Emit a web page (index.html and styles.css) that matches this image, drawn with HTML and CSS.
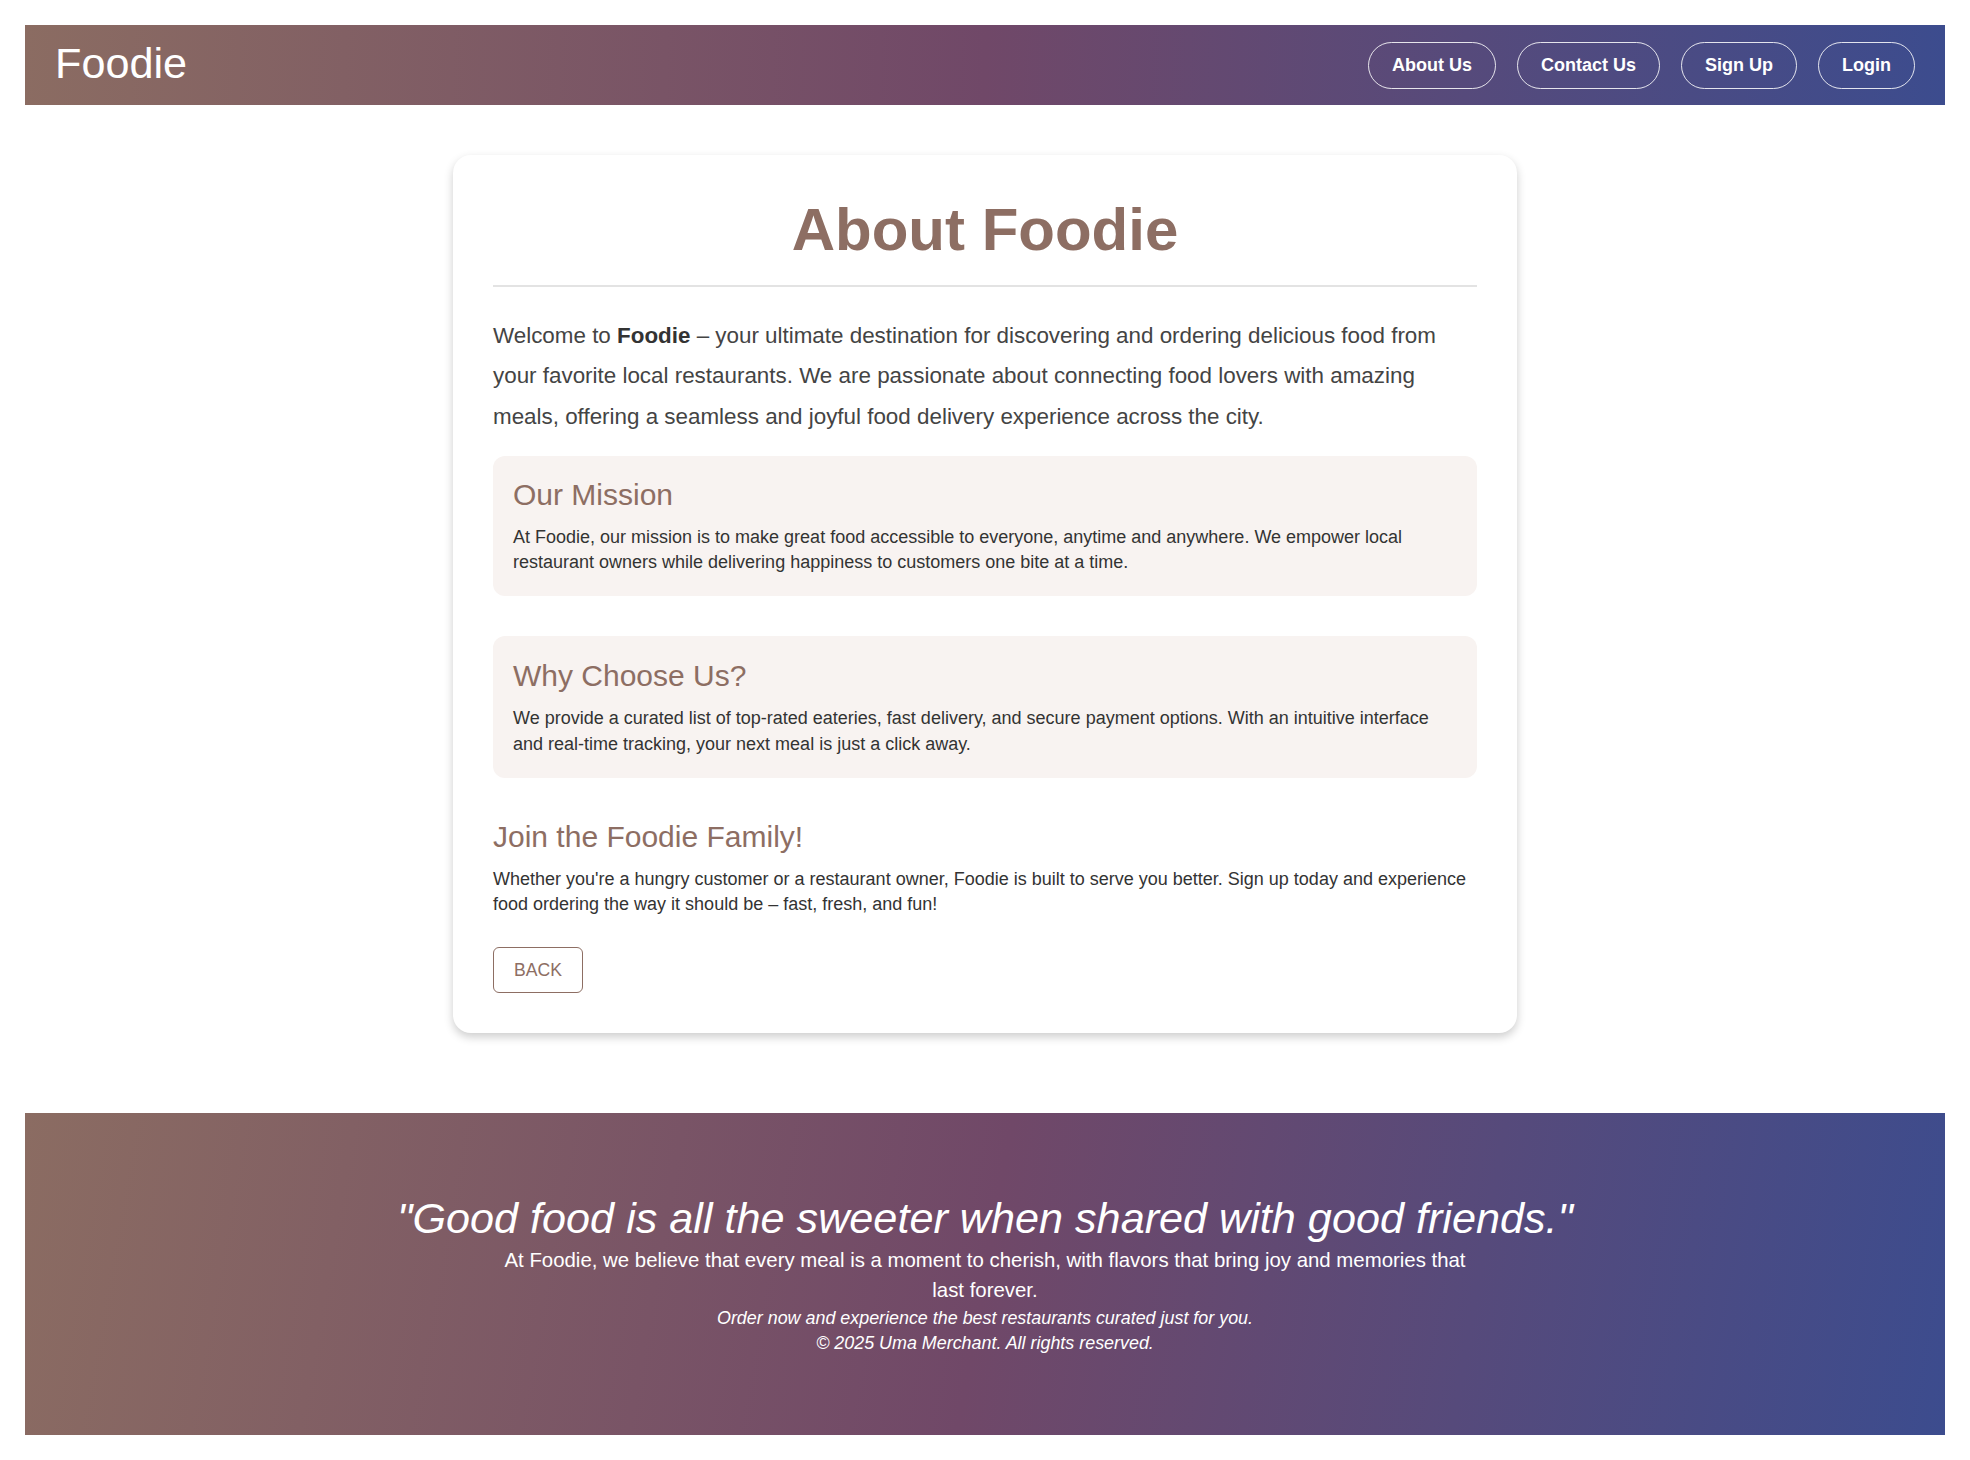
FILE: index.html
```html
<!DOCTYPE html>
<html lang="en">
<head>
<meta charset="utf-8">
<title>About Foodie</title>
<link rel="stylesheet" href="styles.css">
</head>
<body>
  <header class="navbar">
    <div class="brand">Foodie</div>
    <nav class="nav-links">
      <a class="nav-btn" href="#">About Us</a>
      <a class="nav-btn" href="#">Contact Us</a>
      <a class="nav-btn" href="#">Sign Up</a>
      <a class="nav-btn" href="#">Login</a>
    </nav>
  </header>

  <main class="card">
    <h1 class="title">About Foodie</h1>
    <p class="intro">Welcome to <strong>Foodie</strong> – your ultimate destination for discovering and ordering delicious food from your favorite local restaurants. We are passionate about connecting food lovers with amazing meals, offering a seamless and joyful food delivery experience across the city.</p>

    <section class="section highlight">
      <h3 class="section-title">Our Mission</h3>
      <p class="section-text">At Foodie, our mission is to make great food accessible to everyone, anytime and anywhere. We empower local restaurant owners while delivering happiness to customers one bite at a time.</p>
    </section>

    <section class="section highlight">
      <h3 class="section-title">Why Choose Us?</h3>
      <p class="section-text">We provide a curated list of top-rated eateries, fast delivery, and secure payment options. With an intuitive interface and real-time tracking, your next meal is just a click away.</p>
    </section>

    <section class="section plain">
      <h3 class="section-title">Join the Foodie Family!</h3>
      <p class="section-text">Whether you're a hungry customer or a restaurant owner, Foodie is built to serve you better. Sign up today and experience food ordering the way it should be – fast, fresh, and fun!</p>
    </section>

    <button class="back-btn" type="button">BACK</button>
  </main>

  <footer class="footer">
    <p class="quote">"Good food is all the sweeter when shared with good friends."</p>
    <p class="footer-text">At Foodie, we believe that every meal is a moment to cherish, with flavors that bring joy and memories that last forever.</p>
    <p class="footer-small">Order now and experience the best restaurants curated just for you.</p>
    <p class="footer-small">© 2025 Uma Merchant. All rights reserved.</p>
  </footer>
</body>
</html>
```

FILE: styles.css
```css
* {
  box-sizing: border-box;
}

html, body {
  margin: 0;
}

body {
  padding: 25px;
  background: #ffffff;
  font-family: "Liberation Sans", Arial, sans-serif;
  color: #333333;
}

.navbar {
  height: 80px;
  display: flex;
  align-items: center;
  justify-content: space-between;
  padding: 0 30px;
  background: linear-gradient(92deg, #8b6c62 0%, #704868 50%, #3c4c8e 100%);
}

.brand {
  font-size: 43.2px;
  color: #ffffff;
  line-height: 1;
  margin-top: -2px;
}

.nav-links {
  display: flex;
  gap: 21px;
}

.nav-btn {
  display: inline-block;
  padding: 12px 23px;
  border: 1px solid rgba(255, 255, 255, 0.85);
  border-radius: 30px;
  color: #ffffff;
  font-size: 18px;
  line-height: 21px;
  font-weight: bold;
  text-decoration: none;
}

.card {
  width: 1064px;
  margin: 50px auto 80px;
  padding: 40px;
  background: #ffffff;
  border-radius: 18px;
  box-shadow: 0 4px 10px rgba(0, 0, 0, 0.2);
}

.title {
  margin: 0;
  padding-bottom: 21px;
  border-bottom: 2px solid #e3e3e3;
  text-align: center;
  font-size: 60px;
  line-height: 1.15;
  font-weight: bold;
  color: #8d6e63;
}

.intro {
  margin: 29px 0 19px;
  font-size: 22.4px;
  line-height: 40.3px;
  color: #444444;
}

.intro strong {
  color: #333333;
}

.section {
  margin: 0 0 40px;
}

.highlight {
  padding: 21px 20px;
  background: #f8f3f1;
  border-radius: 12px;
}

.highlight + .highlight {
  padding-top: 22px;
}

.plain {
  margin-top: 41px;
  margin-bottom: 30px;
}

.section-title {
  margin: 0 0 12px;
  font-size: 30px;
  line-height: 36px;
  font-weight: normal;
  color: #8d6e63;
}

.section-text {
  margin: 0;
  font-size: 18px;
  line-height: 25.2px;
  color: #333333;
}

.back-btn {
  display: block;
  padding: 12px 20px;
  border: 1px solid #8d6e63;
  border-radius: 6px;
  background: #ffffff;
  color: #8d6e63;
  font-family: "Liberation Sans", Arial, sans-serif;
  font-size: 17.6px;
  line-height: 20px;
  cursor: pointer;
}

.footer {
  padding: 81px 20px 79px;
  text-align: center;
  color: #ffffff;
  background: linear-gradient(100deg, #8b6c62 0%, #704868 50%, #3c4c8e 100%);
}

.quote {
  margin: 0 0 4px;
  font-size: 43.2px;
  line-height: 48px;
  font-style: italic;
}

.footer-text {
  max-width: 985px;
  margin: 0 auto;
  font-size: 20.4px;
  line-height: 29.8px;
}

.footer-small {
  margin: 0;
  font-size: 17.9px;
  line-height: 25px;
  font-style: italic;
}
```
